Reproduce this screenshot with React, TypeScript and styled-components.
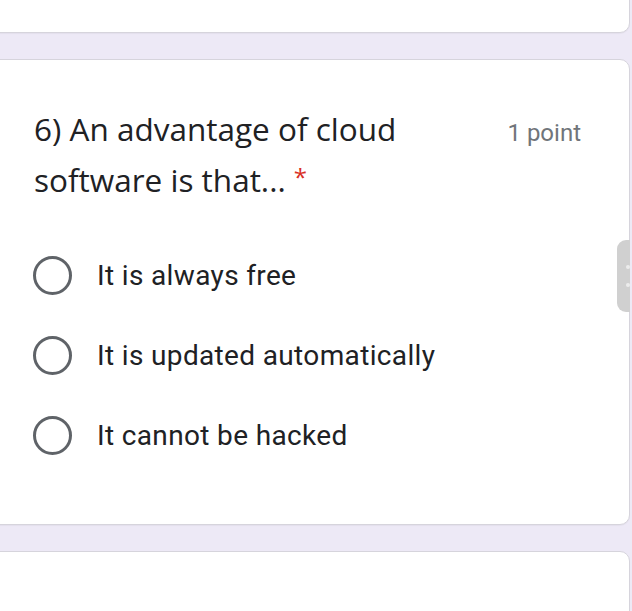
import React from "react";
import styled, { createGlobalStyle } from "styled-components";

const Global = createGlobalStyle`
  html, body { margin: 0; padding: 0; background: #ede9f6; overflow: hidden; }
  body { width: 632px; height: 611px; }
`;

const Page = styled.div`
  position: relative;
  display: flex;
  flex-direction: column;
  gap: 26px;
  margin-left: -14px;
  width: 644px;
  height: 611px;
  overflow: hidden;
`;

const Card = styled.div<{ $h: number; $mt?: number }>`
  box-sizing: border-box;
  flex: none;
  height: ${(p) => p.$h}px;
  margin-top: ${(p) => p.$mt ?? 0}px;
  background: #ffffff;
  border: 1px solid #d6d4dc;
  border-radius: 10px;
  box-shadow: 0 1px 1px rgba(0, 0, 0, 0.04);
`;

const QuestionCard = styled(Card)`
  display: flex;
  flex-direction: column;
  padding: 46px 48px 0 47px;
`;

const Header = styled.div`
  display: flex;
  justify-content: space-between;
  align-items: flex-start;
`;

const Question = styled.div`
  width: 420px;
  font-family: "Open Sans", "Noto Sans", sans-serif;
  font-size: 31.5px;
  line-height: 48px;
  color: #202124;
  margin-top: -1px;
`;

const Star = styled.span`
  color: #d93025;
  margin-left: 8px;
  font-size: 24px;
  vertical-align: 6px;
`;

const Points = styled.div`
  font-family: Roboto, "Noto Sans", sans-serif;
  font-size: 24px;
  line-height: 48px;
  margin-top: 3px;
  color: #70757a;
`;

const Options = styled.div`
  display: flex;
  flex-direction: column;
  margin-top: 31px;
`;

const Option = styled.label`
  display: flex;
  align-items: center;
  height: 80px;
  gap: 25px;
  font-family: Roboto, "Noto Sans", sans-serif;
  font-size: 28px;
  letter-spacing: 0.35px;
  color: #202124;
`;

const Radio = styled.span`
  box-sizing: border-box;
  width: 39px;
  height: 39px;
  margin-left: -1px;
  border: 3.5px solid #5f6368;
  border-radius: 50%;
  flex: none;
`;

const Handle = styled.div`
  position: absolute;
  right: -2px;
  top: 240px;
  width: 15px;
  height: 72px;
  border-radius: 9px 0 0 9px;
  background: #d0d0d0;
  display: flex;
  flex-direction: column;
  justify-content: center;
  align-items: center;
  gap: 14px;
  &::before, &::after {
    content: "";
    width: 4px;
    height: 4px;
    border-radius: 50%;
    background: #ececec;
    margin-left: 6px;
  }
`;

export default function App() {
  const options = ["It is always free", "It is updated automatically", "It cannot be hacked"];
  return (
    <>
      <Global />
      <Page>
        <Card $h={60} $mt={-27} />
        <QuestionCard $h={466}>
          <Header>
            <Question>
              6) An advantage of cloud software is that...
              <Star>*</Star>
            </Question>
            <Points>1 point</Points>
          </Header>
          <Options>
            {options.map((o) => (
              <Option key={o}>
                <Radio />
                {o}
              </Option>
            ))}
          </Options>
        </QuestionCard>
        <Card $h={200} />
        <Handle />
      </Page>
    </>
  );
}
